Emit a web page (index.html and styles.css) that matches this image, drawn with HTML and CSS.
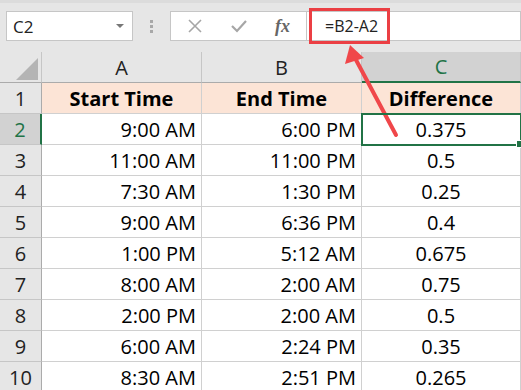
FILE: index.html
```html
<!DOCTYPE html>
<html lang="en">
<head>
  <meta charset="UTF-8" />
  <meta name="viewport" content="width=device-width, initial-scale=1.0"/>
  <title>Time Difference</title>

  <link rel="stylesheet" href="styles.css">
</head>
<body>
  <div class="window">
    <div class="toolbar">
      <div class="name-box">
        <span>C2</span>
        <span class="caret"></span>
      </div>
      <div class="grip"><i></i><i></i><i></i></div>
      <div class="fx-box">
        <svg class="icon-x" width="16" height="16" viewBox="0 0 16 16"><path d="M2 2 L14 14 M14 2 L2 14" stroke="#a6a6a6" stroke-width="1.6" fill="none"/></svg>
        <svg class="icon-ok" width="18" height="16" viewBox="0 0 18 16"><path d="M2 8 L7 13 L16 3" stroke="#a6a6a6" stroke-width="2.2" fill="none"/></svg>
        <span class="fx">fx</span>
      </div>
      <div class="formula">
        <span class="formula-text">=B2-A2</span>
      </div>
    </div>

    <div class="sheet">
      <div class="corner"><span></span></div>
      <div class="col-head">A</div>
      <div class="col-head">B</div>
      <div class="col-head active">C</div>

      <div class="row-head">1</div>
      <div class="cell title">Start Time</div>
      <div class="cell title">End Time</div>
      <div class="cell title">Difference</div>

      <div class="row-head active">2</div>
      <div class="cell">9:00 AM</div>
      <div class="cell">6:00 PM</div>
      <div class="cell num selected">0.375</div>

      <div class="row-head">3</div>
      <div class="cell">11:00 AM</div>
      <div class="cell">11:00 PM</div>
      <div class="cell num">0.5</div>

      <div class="row-head">4</div>
      <div class="cell">7:30 AM</div>
      <div class="cell">1:30 PM</div>
      <div class="cell num">0.25</div>

      <div class="row-head">5</div>
      <div class="cell">9:00 AM</div>
      <div class="cell">6:36 PM</div>
      <div class="cell num">0.4</div>

      <div class="row-head">6</div>
      <div class="cell">1:00 PM</div>
      <div class="cell">5:12 AM</div>
      <div class="cell num">0.675</div>

      <div class="row-head">7</div>
      <div class="cell">8:00 AM</div>
      <div class="cell">2:00 AM</div>
      <div class="cell num">0.75</div>

      <div class="row-head">8</div>
      <div class="cell">2:00 PM</div>
      <div class="cell">2:00 AM</div>
      <div class="cell num">0.5</div>

      <div class="row-head">9</div>
      <div class="cell">6:00 AM</div>
      <div class="cell">2:24 PM</div>
      <div class="cell num">0.35</div>

      <div class="row-head">10</div>
      <div class="cell">8:30 AM</div>
      <div class="cell">2:51 PM</div>
      <div class="cell num">0.265</div>
    </div>

    <!-- callout pointing at the formula -->
    <svg class="arrow" width="521" height="390" viewBox="0 0 521 390">
      <line x1="396" y1="135" x2="355" y2="58" stroke="#f0474a" stroke-width="4" stroke-linecap="round"/>
      <polygon points="350,45 345,64 364,58" fill="#f0474a"/>
    </svg>
  </div>
</body>
</html>
```

FILE: styles.css
```css
* {
  box-sizing: border-box;
  margin: 0;
  padding: 0;
}

body {
  width: 521px;
  height: 390px;
  overflow: hidden;
  background-color: #fff;
  font-family: 'Open Sans', 'Liberation Sans', sans-serif;
  color: #000;
}

.window {
  position: relative;
  width: 521px;
  height: 390px;
  overflow: hidden;
}

/* formula bar */
.toolbar {
  display: flex;
  align-items: flex-start;
  height: 52px;
  padding-top: 8px;
  background-color: #e6e6e6;
  border-top: 3px solid #dcdcdc;
}

.name-box {
  display: flex;
  align-items: center;
  justify-content: space-between;
  margin-left: 6px;
  width: 127px;
  height: 30px;
  padding: 0 8px 0 6px;
  background-color: #fff;
  border: 1px solid #c6c6c6;
  font-size: 17px;
  color: #222;
}

.caret {
  width: 0;
  height: 0;
  border-left: 4px solid transparent;
  border-right: 4px solid transparent;
  border-top: 4px solid #777;
}

.grip {
  width: 37px;
  height: 30px;
  display: flex;
  flex-direction: column;
  align-items: center;
  justify-content: center;
  gap: 2px;
}

.grip i {
  display: block;
  width: 3px;
  height: 3px;
  background-color: #a8a8a8;
}

.fx-box {
  display: flex;
  align-items: center;
  width: 137px;
  height: 30px;
  padding-left: 16px;
  background-color: #fff;
  border: 1px solid #c6c6c6;
}

.icon-ok {
  margin-left: 27px;
}

.fx {
  margin-left: 27px;
  font-family: 'Liberation Serif', serif;
  font-style: italic;
  font-weight: bold;
  font-size: 18px;
  color: #666;
}

.formula {
  flex: 1;
  height: 30px;
  background-color: #fff;
  border: 1px solid #c6c6c6;
  border-left: none;
  position: relative;
}

.formula-text {
  position: absolute;
  left: 2px;
  top: -4px;
  height: 36px;
  width: 81px;
  border: 3px solid #eb3f44;
  display: flex;
  align-items: center;
  padding-left: 13px;
  font-size: 16px;
  color: #222;
}

/* grid */
.sheet {
  display: grid;
  grid-template-columns: 42px 160px 160px 1fr;
  grid-template-rows: 31px repeat(10, 31px);
}

.corner,
.col-head,
.row-head {
  background-color: #e6e6e6;
  border-right: 1px solid #c6c6c6;
  border-bottom: 1px solid #ababab;
  display: flex;
  align-items: center;
  justify-content: center;
  font-size: 20px;
  color: #222;
}

.corner {
  justify-content: flex-end;
  align-items: flex-end;
  padding: 0 3px 2px 0;
}

.corner span {
  width: 0;
  height: 0;
  border-left: 22px solid transparent;
  border-bottom: 22px solid #b4b4b4;
}

.row-head {
  border-bottom: 1px solid #c6c6c6;
  border-right-color: #ababab;
}

.col-head.active {
  background-color: #d2d2d2;
  color: #217346;
  border-bottom: 2px solid #217346;
}

.row-head.active {
  background-color: #d2d2d2;
  color: #217346;
  border-right: 2px solid #217346;
}

.cell {
  position: relative;
  display: flex;
  align-items: center;
  justify-content: flex-end;
  padding-right: 5px;
  border-right: 1px solid #d0d0d0;
  border-bottom: 1px solid #d0d0d0;
  font-size: 20px;
}

.cell.title {
  justify-content: center;
  padding-right: 0;
  background-color: #fce4d6;
  font-weight: bold;
}

.cell.num {
  justify-content: center;
  padding-right: 0;
}

.cell.selected {
  outline: 2px solid #217346;
  outline-offset: -1px;
  z-index: 1;
}

.cell.selected::after {
  content: '';
  position: absolute;
  right: -4px;
  bottom: -4px;
  width: 6px;
  height: 6px;
  background-color: #217346;
  border: 1px solid #fff;
}

.arrow {
  position: absolute;
  left: 0;
  top: 0;
  pointer-events: none;
}
```
